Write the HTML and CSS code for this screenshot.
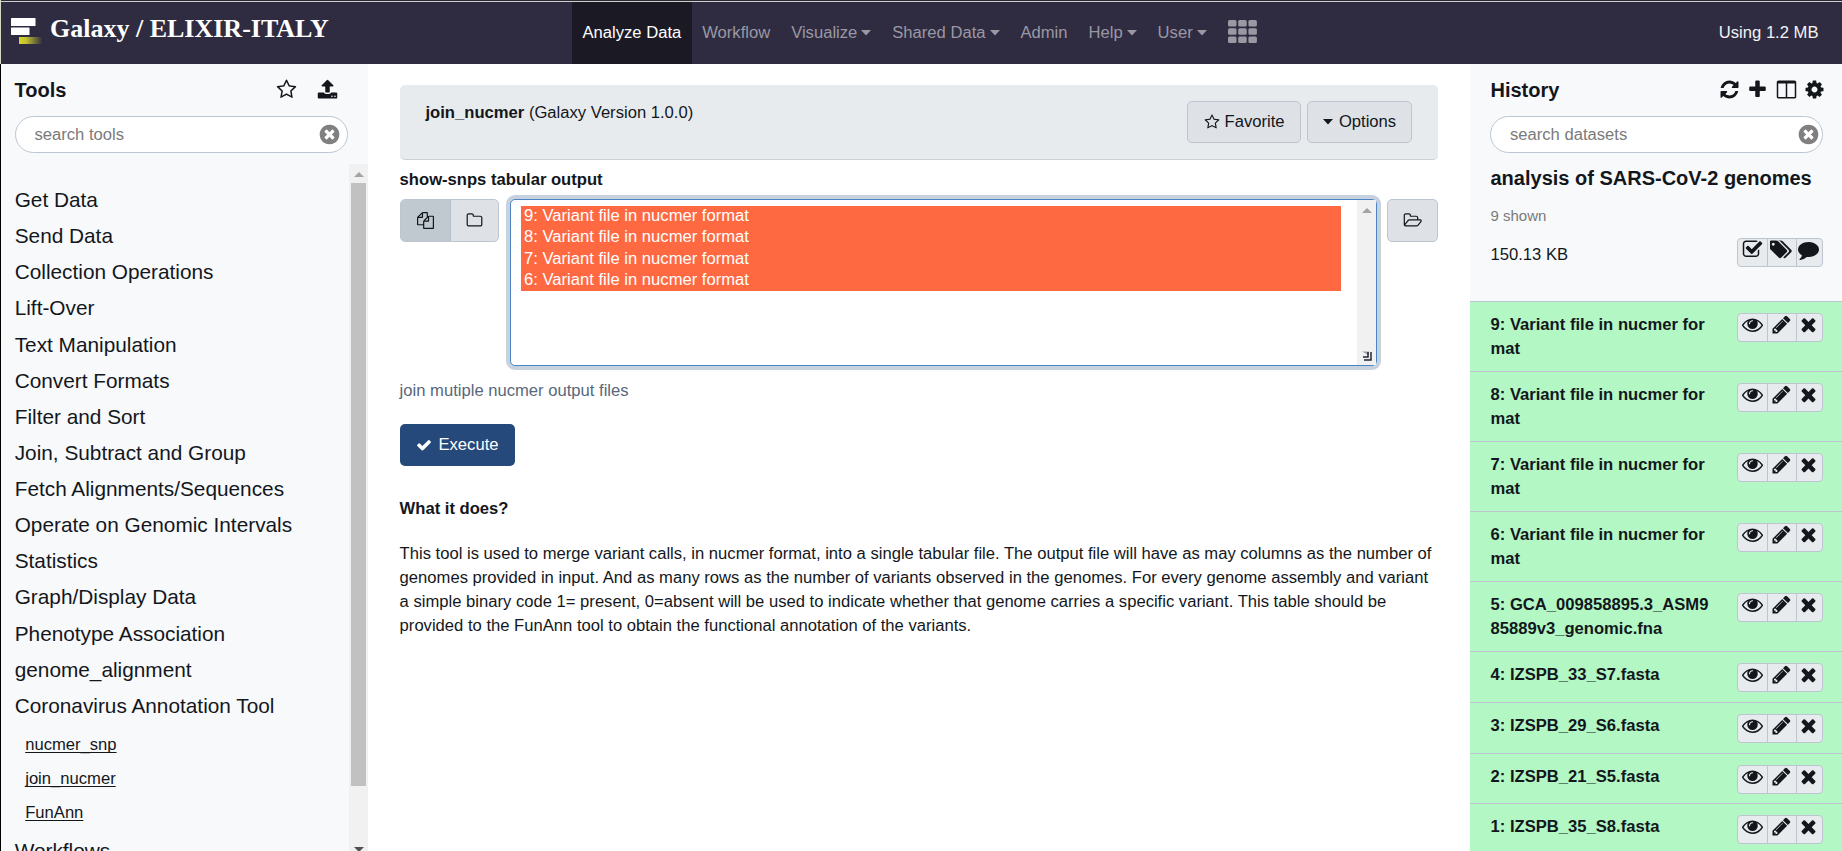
FILE: index.html
```html
<!DOCTYPE html>
<html lang="en">
<head>
<meta charset="utf-8">
<title>Galaxy / ELIXIR-ITALY</title>
<link rel="stylesheet" href="styles.css">
</head>
<body>
<svg class="sprite" xmlns="http://www.w3.org/2000/svg">
<symbol id="star-o" viewBox="0 0 1792 1792"><path d="M1201 1004l306-297-422-62-189-382-189 382-422 62 306 297-73 421 378-199 377 199zm527-357q0 22-26 48l-363 354 86 500q1 7 1 20 0 50-41 50-19 0-40-12l-449-236-449 236q-22 12-40 12-21 0-31.500-14.500t-10.500-35.500q0-6 2-20l86-500-364-354q-25-27-25-48 0-37 56-46l502-73 225-455q19-41 49-41t49 41l225 455 502 73q56 9 56 46z"/></symbol>
<symbol id="upload" viewBox="0 0 1792 1792"><path d="M1344 1472q0-26-19-45t-45-19-45 19-19 45 19 45 45 19 45-19 19-45zm256 0q0-26-19-45t-45-19-45 19-19 45 19 45 45 19 45-19 19-45zm128-224v320q0 40-28 68t-68 28h-1472q-40 0-68-28t-28-68v-320q0-40 28-68t68-28h427q21 56 70.500 92t110.500 36h256q61 0 110.500-36t70.500-92h427q40 0 68 28t28 68zm-325-648q-17 40-59 40h-256v448q0 26-19 45t-45 19h-256q-26 0-45-19t-19-45v-448h-256q-42 0-59-40-17-39 14-69l448-448q18-19 45-19t45 19l448 448q31 30 14 69z"/></symbol>
<symbol id="times-circle" viewBox="0 0 1792 1792"><path d="M1277 1122q0-26-19-45l-181-181 181-181q19-19 19-45 0-27-19-46l-90-90q-19-19-46-19-26 0-45 19l-181 181-181-181q-19-19-45-19-27 0-46 19l-90 90q-19 19-19 46 0 26 19 45l181 181-181 181q-19 19-19 45 0 27 19 46l90 90q19 19 46 19 26 0 45-19l181-181 181 181q19 19 45 19 27 0 46-19l90-90q19-19 19-46zm387-226q0 209-103 385.500t-279.500 279.500-385.500 103-385.500-103-279.500-279.500-103-385.500 103-385.500 279.500-279.500 385.500-103 385.500 103 279.500 279.500 103 385.500z"/></symbol>
<symbol id="refresh" viewBox="0 0 1792 1792"><path d="M1639 1056q0 5-1 7-64 268-268 434.500t-478 166.500q-146 0-282.500-55t-243.500-157l-129 129q-19 19-45 19t-45-19-19-45v-448q0-26 19-45t45-19h448q26 0 45 19t19 45-19 45l-137 137q71 66 161 102t187 36q134 0 250-65t186-179q11-17 53-117 8-23 30-23h192q13 0 22.500 9.500t9.500 22.500zm25-800v448q0 26-19 45t-45 19h-448q-26 0-45-19t-19-45 19-45l138-138q-148-137-349-137-134 0-250 65t-186 179q-11 17-53 117-8 23-30 23h-199q-13 0-22.500-9.500t-9.500-22.500v-7q65-268 270-434.500t480-166.500q146 0 284 55.500t245 156.500l130-129q19-19 45-19t45 19 19 45z"/></symbol>
<symbol id="plus" viewBox="0 0 1792 1792"><path d="M1600 736v192q0 40-28 68t-68 28h-416v416q0 40-28 68t-68 28h-192q-40 0-68-28t-28-68v-416h-416q-40 0-68-28t-28-68v-192q0-40 28-68t68-28h416v-416q0-40 28-68t68-28h192q40 0 68 28t28 68v416h416q40 0 68 28t28 68z"/></symbol>
<symbol id="columns" viewBox="0 0 1792 1792"><path d="M224 1536h608v-1152h-640v1120q0 13 9.500 22.500t22.500 9.500zm1376-32v-1120h-640v1152h608q13 0 22.500-9.500t9.500-22.500zm128-1216v1216q0 66-47 113t-113 47h-1344q-66 0-113-47t-47-113v-1216q0-66 47-113t113-47h1344q66 0 113 47t47 113z"/></symbol>
<symbol id="cog" viewBox="0 0 1792 1792"><path d="M1152 896q0-106-75-181t-181-75-181 75-75 181 75 181 181 75 181-75 75-181zm512-109v222q0 12-8 23t-20 13l-185 28q-19 54-39 91 35 50 107 138 10 12 10 25t-9 23q-27 37-99 108t-94 71q-12 0-26-9l-138-108q-44 23-91 38-16 136-29 186-7 28-36 28h-222q-14 0-24.500-8.500t-11.500-21.500l-28-184q-49-16-90-37l-141 107q-10 9-25 9-14 0-25-11-126-114-165-168-7-10-7-23 0-12 8-23 15-21 51-66.500t54-70.500q-27-50-41-99l-183-27q-13-2-21-12.500t-8-23.500v-222q0-12 8-23t19-13l186-28q14-46 39-92-40-57-107-138-10-12-10-24 0-10 9-23 26-36 98.500-107.500t94.500-71.500q13 0 26 10l138 107q44-23 91-38 16-136 29-186 7-28 36-28h222q14 0 24.500 8.500t11.500 21.500l28 184q49 16 90 37l142-107q9-9 24-9 13 0 25 10 129 119 165 170 7 8 7 22 0 12-8 23-15 21-51 66.500t-54 70.500q26 50 41 98l183 28q13 2 21 12.500t8 23.500z"/></symbol>
<symbol id="check-square-o" viewBox="0 0 1792 1792"><path d="M1472 930v318q0 119-84.500 203.500t-203.500 84.500h-832q-119 0-203.500-84.500t-84.500-203.500v-832q0-119 84.500-203.500t203.500-84.500h832q63 0 117 25 15 7 18 23 3 17-9 29l-49 49q-10 10-23 10-3 0-9-2-23-6-45-6h-832q-66 0-113 47t-47 113v832q0 66 47 113t113 47h832q66 0 113-47t47-113v-254q0-13 9-22l64-64q10-10 23-10 6 0 12 3 20 8 20 29zm231-489l-814 814q-24 24-57 24t-57-24l-430-430q-24-24-24-57t24-57l110-110q24-24 57-24t57 24l263 263 647-647q24-24 57-24t57 24l110 110q24 24 24 57t-24 57z"/></symbol>
<symbol id="tags" viewBox="0 0 1920 1792"><path d="M384 448q0-53-37.500-90.500t-90.500-37.500-90.500 37.500-37.500 90.500 37.500 90.500 90.500 37.500 90.500-37.500 37.500-90.500zm1067 576q0 53-37 90l-491 492q-39 37-91 37-53 0-90-37l-715-716q-38-37-64.500-101t-26.500-117v-416q0-52 38-90t90-38h416q53 0 117 26.500t102 64.500l715 714q37 39 37 91zm384 0q0 53-37 90l-491 492q-39 37-91 37-36 0-59-14t-53-45l470-470q37-37 37-90 0-52-37-91l-715-714q-38-38-102-64.500t-117-26.500h224q53 0 117 26.500t102 64.500l715 714q37 39 37 91z"/></symbol>
<symbol id="comment" viewBox="0 0 1792 1792"><path d="M1792 896q0 174-120 321.500t-326 233-450 85.500q-70 0-145-8-198 175-460 242-49 14-114 22-17 2-30.500-9t-17.500-29v-1q-3-4-.5-12t2-10 4.500-9.500l6-9 7-8.500 8-9q7-8 31-34.500t34.500-38 31-39.500 32.500-51 27-59 26-76q-157-89-247.500-220t-90.500-281q0-130 71-248.500t191-204.500 286-136.500 348-50.500q244 0 450 85.500t326 233 120 321.500z"/></symbol>
<symbol id="eye" viewBox="0 0 1792 1792"><path d="M1664 960q-152-236-381-353 61 104 61 225 0 185-131.500 316.500t-316.500 131.500-316.500-131.500-131.500-316.500q0-121 61-225-229 117-381 353 133 205 333.500 326.500t434.500 121.500 434.500-121.500 333.500-326.500zm-720-384q0-20-14-34t-34-14q-125 0-214.500 89.500t-89.500 214.500q0 20 14 34t34 14 34-14 14-34q0-86 61-147t147-61q20 0 34-14t14-34zm848 384q0 34-20 69-140 230-376.500 368.500t-499.500 138.500-499.500-139-376.500-368q-20-35-20-69t20-69q140-229 376.500-368t499.500-139 499.500 139 376.500 368q20 35 20 69z"/></symbol>
<symbol id="pencil" viewBox="0 0 1792 1792"><path d="M491 1536l91-91-235-235-91 91v107h128v128h107zm523-928q0-22-22-22-10 0-17 7l-542 542q-7 7-7 17 0 22 22 22 10 0 17-7l542-542q7-7 7-17zm-54-192l416 416-832 832h-416v-416zm683 96q0 53-37 90l-166 166-416-416 166-165q36-38 90-38 53 0 91 38l235 234q37 39 37 91z"/></symbol>
<symbol id="times" viewBox="0 0 1792 1792"><path d="M1490 1322q0 40-28 68l-136 136q-28 28-68 28t-68-28l-294-294-294 294q-28 28-68 28t-68-28l-136-136q-28-28-28-68t28-68l294-294-294-294q-28-28-28-68t28-68l136-136q28-28 68-28t68 28l294 294 294-294q28-28 68-28t68 28l136 136q28 28 28 68t-28 68l-294 294 294 294q28 28 28 68z"/></symbol>
<symbol id="files-o" viewBox="0 0 1792 1792"><path d="M1696 384q40 0 68 28t28 68v1216q0 40-28 68t-68 28h-960q-40 0-68-28t-28-68v-288h-544q-40 0-68-28t-28-68v-672q0-40 20-88t48-76l408-408q28-28 76-48t88-20h416q40 0 68 28t28 68v328q68-40 128-40h416zm-544 213l-299 299h299v-299zm-640-384l-299 299h299v-299zm196 647l316-316v-416h-384v416q0 40-28 68t-68 28h-416v640h512v-256q0-40 20-88t48-76zm956 804v-1152h-384v416q0 40-28 68t-68 28h-416v640h896z"/></symbol>
<symbol id="folder-o" viewBox="0 0 1792 1792"><path d="M1600 1312v-704q0-40-28-68t-68-28h-704q-40 0-68-28t-28-68v-64q0-40-28-68t-68-28h-320q-40 0-68 28t-28 68v960q0 40 28 68t68 28h1216q40 0 68-28t28-68zm128-704v704q0 92-66 158t-158 66h-1216q-92 0-158-66t-66-158v-960q0-92 66-158t158-66h320q92 0 158 66t66 158v32h672q92 0 158 66t66 158z"/></symbol>
<symbol id="folder-open-o" viewBox="0 0 1984 1792"><path d="M1845 931q0-35-53-35h-1088q-40 0-85.500 21.500t-71.500 52.500l-294 363q-18 24-18 40 0 35 53 35h1088q40 0 86-22t71-53l294-363q18-22 18-39zm-1141-163h768v-160q0-40-28-68t-68-28h-576q-40 0-68-28t-28-68v-64q0-40-28-68t-68-28h-320q-40 0-68 28t-28 68v853l256-315q44-53 116-87.500t140-34.500zm1269 163q0 62-46 120l-295 363q-43 53-116 87.500t-140 34.500h-1088q-92 0-158-66t-66-158v-960q0-92 66-158t158-66h320q92 0 158 66t66 158v32h544q92 0 158 66t66 158v160h192q54 0 99 24.500t67 70.500q15 32 15 68z"/></symbol>
<symbol id="check" viewBox="0 0 1792 1792"><path d="M1671 566q0 40-28 68l-724 724-136 136q-28 28-68 28t-68-28l-136-136-362-362q-28-28-28-68t28-68l136-136q28-28 68-28t68 28l294 295 656-657q28-28 68-28t68 28l136 136q28 28 28 68z"/></symbol>
<symbol id="caret" viewBox="0 0 10 6"><path d="M0 0h10L5 5.500z"/></symbol>
<symbol id="th" viewBox="0 0 29 23"><g><rect width="8.500" height="6.500" rx="1.500"/><rect x="10.200" width="8.500" height="6.500" rx="1.500"/><rect x="20.400" width="8.500" height="6.500" rx="1.500"/><rect y="8.200" width="8.500" height="6.500" rx="1.500"/><rect x="10.200" y="8.200" width="8.500" height="6.500" rx="1.500"/><rect x="20.400" y="8.200" width="8.500" height="6.500" rx="1.500"/><rect y="16.400" width="8.500" height="6.500" rx="1.500"/><rect x="10.200" y="16.400" width="8.500" height="6.500" rx="1.500"/><rect x="20.400" y="16.400" width="8.500" height="6.500" rx="1.500"/></g></symbol>
</svg>

<div class="app">
<header class="masthead">
  <a class="brand">
    <svg class="logo" viewBox="0 0 32 28">
      <defs><linearGradient id="fade"><stop offset="0" stop-color="#d8d62c"/><stop offset=".3" stop-color="#c3c12f"/><stop offset="1" stop-color="#2f2c42"/></linearGradient></defs>
      <rect x="0" y="0" width="24.500" height="8" rx=".5" fill="#fff"/>
      <rect x="0" y="9.500" width="18.500" height="7.500" rx=".5" fill="#fff"/>
      <rect x="8" y="19" width="23.500" height="7" fill="url(#fade)"/>
    </svg>
    <span class="brand-text">Galaxy / ELIXIR-ITALY</span>
  </a>
  <nav class="menu">
    <a class="tab active">Analyze Data</a>
    <a class="tab">Workflow</a>
    <a class="tab">Visualize<svg class="dd"><use href="#caret"/></svg></a>
    <a class="tab">Shared Data<svg class="dd"><use href="#caret"/></svg></a>
    <a class="tab">Admin</a>
    <a class="tab">Help<svg class="dd"><use href="#caret"/></svg></a>
    <a class="tab">User<svg class="dd"><use href="#caret"/></svg></a>
    <a class="tab"><svg class="grid-icon"><use href="#th"/></svg></a>
  </nav>
  <span class="quota">Using 1.2 MB</span>
</header>

<div class="columns">
<aside class="tools">
  <div class="panel-head"><h2>Tools</h2><div class="tool-icons"><svg class="i20"><use href="#star-o"/></svg><svg class="i21"><use href="#upload"/></svg></div></div>
  <div class="search"><span>search tools</span><svg class="clear"><use href="#times-circle"/></svg></div>
  <div class="tool-body">
    <div class="tool-list">
      <a class="section">Get Data</a>
      <a class="section">Send Data</a>
      <a class="section">Collection Operations</a>
      <a class="section">Lift-Over</a>
      <a class="section">Text Manipulation</a>
      <a class="section">Convert Formats</a>
      <a class="section">Filter and Sort</a>
      <a class="section">Join, Subtract and Group</a>
      <a class="section">Fetch Alignments/Sequences</a>
      <a class="section">Operate on Genomic Intervals</a>
      <a class="section">Statistics</a>
      <a class="section">Graph/Display Data</a>
      <a class="section">Phenotype Association</a>
      <a class="section">genome_alignment</a>
      <a class="section">Coronavirus Annotation Tool</a>
      <div class="subtools">
        <a class="tool">nucmer_snp</a>
        <a class="tool">join_nucmer</a>
        <a class="tool">FunAnn</a>
      </div>
      <a class="section">Workflows</a>
    </div>
    <div class="scrollbar"><i class="up"></i><i class="thumb"></i><i class="down"></i></div>
  </div>
</aside>

<main class="center">
  <div class="form-head">
    <div class="form-title"><b>join_nucmer</b> (Galaxy Version 1.0.0)</div>
    <div class="head-buttons">
      <button class="btn favorite"><svg class="i16"><use href="#star-o"/></svg>Favorite</button>
      <button class="btn options"><svg class="opt-caret"><use href="#caret"/></svg>Options</button>
    </div>
  </div>
  <div class="label">show-snps tabular output</div>
  <div class="field">
    <div class="seg"><span class="seg-item on"><svg class="i17"><use href="#files-o"/></svg></span><span class="seg-item"><svg class="i17"><use href="#folder-o"/></svg></span></div>
    <div class="select">
      <div class="options-list">
        <div>9: Variant file in nucmer format</div>
        <div>8: Variant file in nucmer format</div>
        <div>7: Variant file in nucmer format</div>
        <div>6: Variant file in nucmer format</div>
      </div>
      <div class="select-bar"><i class="up"></i><svg class="grip" viewBox="0 0 10 10"><path d="M0 .5h7v4z" fill="#a3a3a3"/><path d="M9 1v8H2M6 1v5H1" fill="none" stroke="#222633" stroke-width="1.500"/></svg></div>
    </div>
    <button class="btn browse"><svg class="i18"><use href="#folder-open-o"/></svg></button>
  </div>
  <div class="help">join mutiple nucmer output files</div>
  <button class="execute"><svg class="i16"><use href="#check"/></svg>Execute</button>
  <h3 class="what">What it does?</h3>
  <p class="desc">This tool is used to merge variant calls, in nucmer format, into a single tabular file. The output file will have as may columns as the number of<br>genomes provided in input. And as many rows as the number of variants observed in the genomes. For every genome assembly and variant<br>a simple binary code 1= present, 0=absent will be used to indicate whether that genome carries a specific variant. This table should be<br>provided to the FunAnn tool to obtain the functional annotation of the variants.</p>
</main>

<aside class="history">
  <div class="panel-head"><h2>History</h2><div class="hist-icons"><svg class="i21"><use href="#refresh"/></svg><svg class="i21"><use href="#plus"/></svg><svg class="i21"><use href="#columns"/></svg><svg class="i21"><use href="#cog"/></svg></div></div>
  <div class="search"><span>search datasets</span><svg class="clear"><use href="#times-circle"/></svg></div>
  <div class="hist-name">analysis of SARS-CoV-2 genomes</div>
  <div class="shown">9 shown</div>
  <div class="size-row"><span>150.13 KB</span><div class="acts"><span><svg><use href="#check-square-o"/></svg></span><span><svg class="wide"><use href="#tags"/></svg></span><span><svg><use href="#comment"/></svg></span></div></div>
  <div class="datasets">
    <div class="ds"><span>9: Variant file in nucmer for<br>mat</span><div class="acts"><span><svg><use href="#eye"/></svg></span><span><svg><use href="#pencil"/></svg></span><span><svg><use href="#times"/></svg></span></div></div>
    <div class="ds"><span>8: Variant file in nucmer for<br>mat</span><div class="acts"><span><svg><use href="#eye"/></svg></span><span><svg><use href="#pencil"/></svg></span><span><svg><use href="#times"/></svg></span></div></div>
    <div class="ds"><span>7: Variant file in nucmer for<br>mat</span><div class="acts"><span><svg><use href="#eye"/></svg></span><span><svg><use href="#pencil"/></svg></span><span><svg><use href="#times"/></svg></span></div></div>
    <div class="ds"><span>6: Variant file in nucmer for<br>mat</span><div class="acts"><span><svg><use href="#eye"/></svg></span><span><svg><use href="#pencil"/></svg></span><span><svg><use href="#times"/></svg></span></div></div>
    <div class="ds"><span>5: GCA_009858895.3_ASM9<br>85889v3_genomic.fna</span><div class="acts"><span><svg><use href="#eye"/></svg></span><span><svg><use href="#pencil"/></svg></span><span><svg><use href="#times"/></svg></span></div></div>
    <div class="ds"><span>4: IZSPB_33_S7.fasta</span><div class="acts"><span><svg><use href="#eye"/></svg></span><span><svg><use href="#pencil"/></svg></span><span><svg><use href="#times"/></svg></span></div></div>
    <div class="ds"><span>3: IZSPB_29_S6.fasta</span><div class="acts"><span><svg><use href="#eye"/></svg></span><span><svg><use href="#pencil"/></svg></span><span><svg><use href="#times"/></svg></span></div></div>
    <div class="ds"><span>2: IZSPB_21_S5.fasta</span><div class="acts"><span><svg><use href="#eye"/></svg></span><span><svg><use href="#pencil"/></svg></span><span><svg><use href="#times"/></svg></span></div></div>
    <div class="ds"><span>1: IZSPB_35_S8.fasta</span><div class="acts"><span><svg><use href="#eye"/></svg></span><span><svg><use href="#pencil"/></svg></span><span><svg><use href="#times"/></svg></span></div></div>
  </div>
</aside>
</div>
</div>
</body>
</html>
```
FILE: styles.css
```css
* { box-sizing: border-box; }
html, body { height: 100%; margin: 0; overflow: hidden; }
body { font: 16.62px/24px "Liberation Sans", Arial, sans-serif; color: #13171c; background: #fff; }
svg { display: block; fill: currentColor; flex: none; }
h2, h3, p { margin: 0; }
button { font: inherit; color: inherit; margin: 0; padding: 0; }
.sprite { position: absolute; width: 0; height: 0; }
.i16 { width: 16px; height: 16px; }
.i17 { width: 17px; height: 17px; }
.i18 { width: 19px; height: 17px; }
.i20 { width: 21px; height: 21px; }
.i21 { width: 21px; height: 21px; }

.app { height: 851px; display: flex; flex-direction: column; white-space: nowrap; border-left: 1px solid #000; }

.masthead { height: 64px; flex: none; display: grid; grid-template-columns: 571px 1fr auto; align-items: stretch; background: #2f2c42; border-top: 1px solid #2b2a33; box-shadow: inset 0 1px #cfcfcf, -1px 0 #d8d8c0; color: #f3f3f5; }
.brand { display: flex; align-items: flex-start; padding: 17px 0 0 10px; gap: 7px; }
.logo { width: 32px; height: 28px; }
.brand-text { font: bold 26px/22px "Liberation Serif", "Times New Roman", serif; color: #fff; }
.menu { display: flex; padding-top: 1px; }
.tab { display: flex; align-items: center; padding: 0 10.47px; color: #9a98a3; }
.tab.active { background: #1b1924; color: #fff; }
.dd { width: 10px; height: 6px; margin-left: 4px; }
.grid-icon { width: 29px; height: 23px; margin-top: -3px; }
.quota { align-self: center; padding: 1px 23.5px 0 0; }

.columns { flex: 1; min-height: 0; display: grid; grid-template-columns: 367px 1fr 372px; }
.tools, .history { background: #f8f9fb; min-height: 0; overflow: hidden; }
.tools { display: flex; flex-direction: column; }
.panel-head { display: flex; justify-content: space-between; align-items: center; height: 52px; padding: 0 0 1px 13.5px; }
.panel-head h2 { font-size: 20px; font-weight: bold; line-height: 24px; }
.tool-icons { display: flex; gap: 20px; padding-right: 30.5px; }
.search { height: 37px; flex: none; margin: 0 20px 0 14px; padding: 0 8px 0 18.5px; display: flex; align-items: center; justify-content: space-between; background: #fff; border: 1px solid #bdc6d0; border-radius: 19px; color: #7a7a7a; }
.clear { width: 23px; height: 23px; color: #808080; margin-right: -2px; }
.tool-body { flex: 1; min-height: 0; margin-top: 11px; display: flex; }
.tool-list { flex: 1; padding: 18px 0 0 13.7px; overflow: hidden; }
.section { display: block; font-size: 20.8px; line-height: 36.130px; }
.subtools { padding: 4px 0 3px 10.5px; }
.tool { display: block; height: 34px; line-height: 34px; text-decoration: underline; text-underline-offset: 2px; text-decoration-skip-ink: none; }
.scrollbar { width: 19px; background: #f1f1f1; display: flex; flex-direction: column; align-items: center; overflow: hidden; }
.up { flex: none; border: 5px solid transparent; border-top: 0; border-bottom-color: #a3a3a3; margin-top: 8px; }
.thumb { flex: none; width: 15px; height: 603px; margin-top: 6px; background: #c1c1c1; }
.down { flex: none; border: 5px solid transparent; border-bottom: 0; border-top-color: #505050; margin-top: 61px; }

.center { padding: 21px 32px 0 32px; min-width: 0; }
.form-head { height: 75px; display: flex; justify-content: space-between; padding: 16px 26px 0 25.5px; background: #e8ebee; border-bottom: 1px solid #c9d0d6; border-radius: 5px; }
.head-buttons { display: flex; gap: 6px; }
.btn { height: 42px; display: flex; align-items: center; justify-content: center; background: #dee2e6; border: 1px solid #bdc6d0; border-radius: 5px; }
.favorite { width: 114px; gap: 5px; }
.options { width: 105px; gap: 6px; }
.opt-caret { width: 10px; height: 6px; }
.label { font-weight: bold; margin: 8px 0 0 -.4px; }
.field { display: flex; margin-top: 7px; }
.seg { display: flex; width: 99px; height: 43px; border: 1px solid #bdc6d0; border-radius: 5px; background: #dee2e6; overflow: hidden; }
.seg-item { flex: 1; display: flex; align-items: center; justify-content: center; }
.seg-item.on { background: #c1c9d0; flex: 0 0 50px; border-right: 1px solid #b6bfc9; }
.select { width: 867px; height: 167px; margin-left: 11px; display: flex; border: 1px solid #4a86c5; border-radius: 5px; background: #fff; box-shadow: 0 0 0 4px #c8d1de; }
.options-list { flex: 1; padding: 6px 16px 0 10px; color: #fff; line-height: 21.300px; }
.options-list div { background: #ff6941; padding: 0 0 1px 3px; height: 21.300px; line-height: 20px; }
.select-bar { width: 19px; background: #f1f1f1; display: flex; flex-direction: column; align-items: center; justify-content: space-between; }
.grip { width: 10px; height: 10px; margin-bottom: 4px; }
.browse { width: 51px; height: 43px; margin-left: 10px; }
.help { margin: 13px 0 0 -.4px; color: #58687b; }
.execute { margin-top: 21px; width: 115px; height: 42px; border: 0; border-radius: 5px; background: #25497a; color: #fff; display: flex; align-items: center; justify-content: center; gap: 6px; }
.what { font-size: 16.6px; margin: 31px 0 0 -.4px; }
.desc { margin: 21px 0 0 -.4px; }

.history .panel-head { padding-left: 20.5px; }
.hist-icons { display: flex; gap: 7.3px; padding-right: 17px; }
.history .search { margin: 0 19px 0 20px; padding: 0 4px 0 19px; }
.hist-name { font-weight: bold; font-size: 20px; padding-left: 20.5px; margin-top: 13px; }
.shown { font-size: 15px; color: #7a7a7a; padding-left: 20.5px; margin-top: 14px; }
.size-row { display: flex; justify-content: space-between; padding: 10px 19px 0 20.5px; height: 73px; }
.size-row > span { padding-top: 5px; }
.acts { display: grid; grid-template-columns: 29px 29px 26px; width: 86px; height: 29px; background: #e8ebee; border: 1px solid #bdc6d0; border-radius: 4px; color: #13171c; }
.acts > span { display: flex; justify-content: center; overflow: hidden; padding-right: 1px; }
.acts > span + span { border-left: 1px solid #bdc6d0; padding-right: 2px; }
.acts svg { width: 21px; height: 21px; }
.acts svg.wide { width: 23px; }
.ds { display: flex; justify-content: space-between; align-items: flex-start; height: 51px; padding: 11px 19px 0 20.5px; font-weight: bold; background: #b2f7c4; border-top: 1px solid #bdc6d0; }
.ds:nth-child(-n+5) { height: 70px; }
.ds:nth-child(8) { height: 50px; }
```
